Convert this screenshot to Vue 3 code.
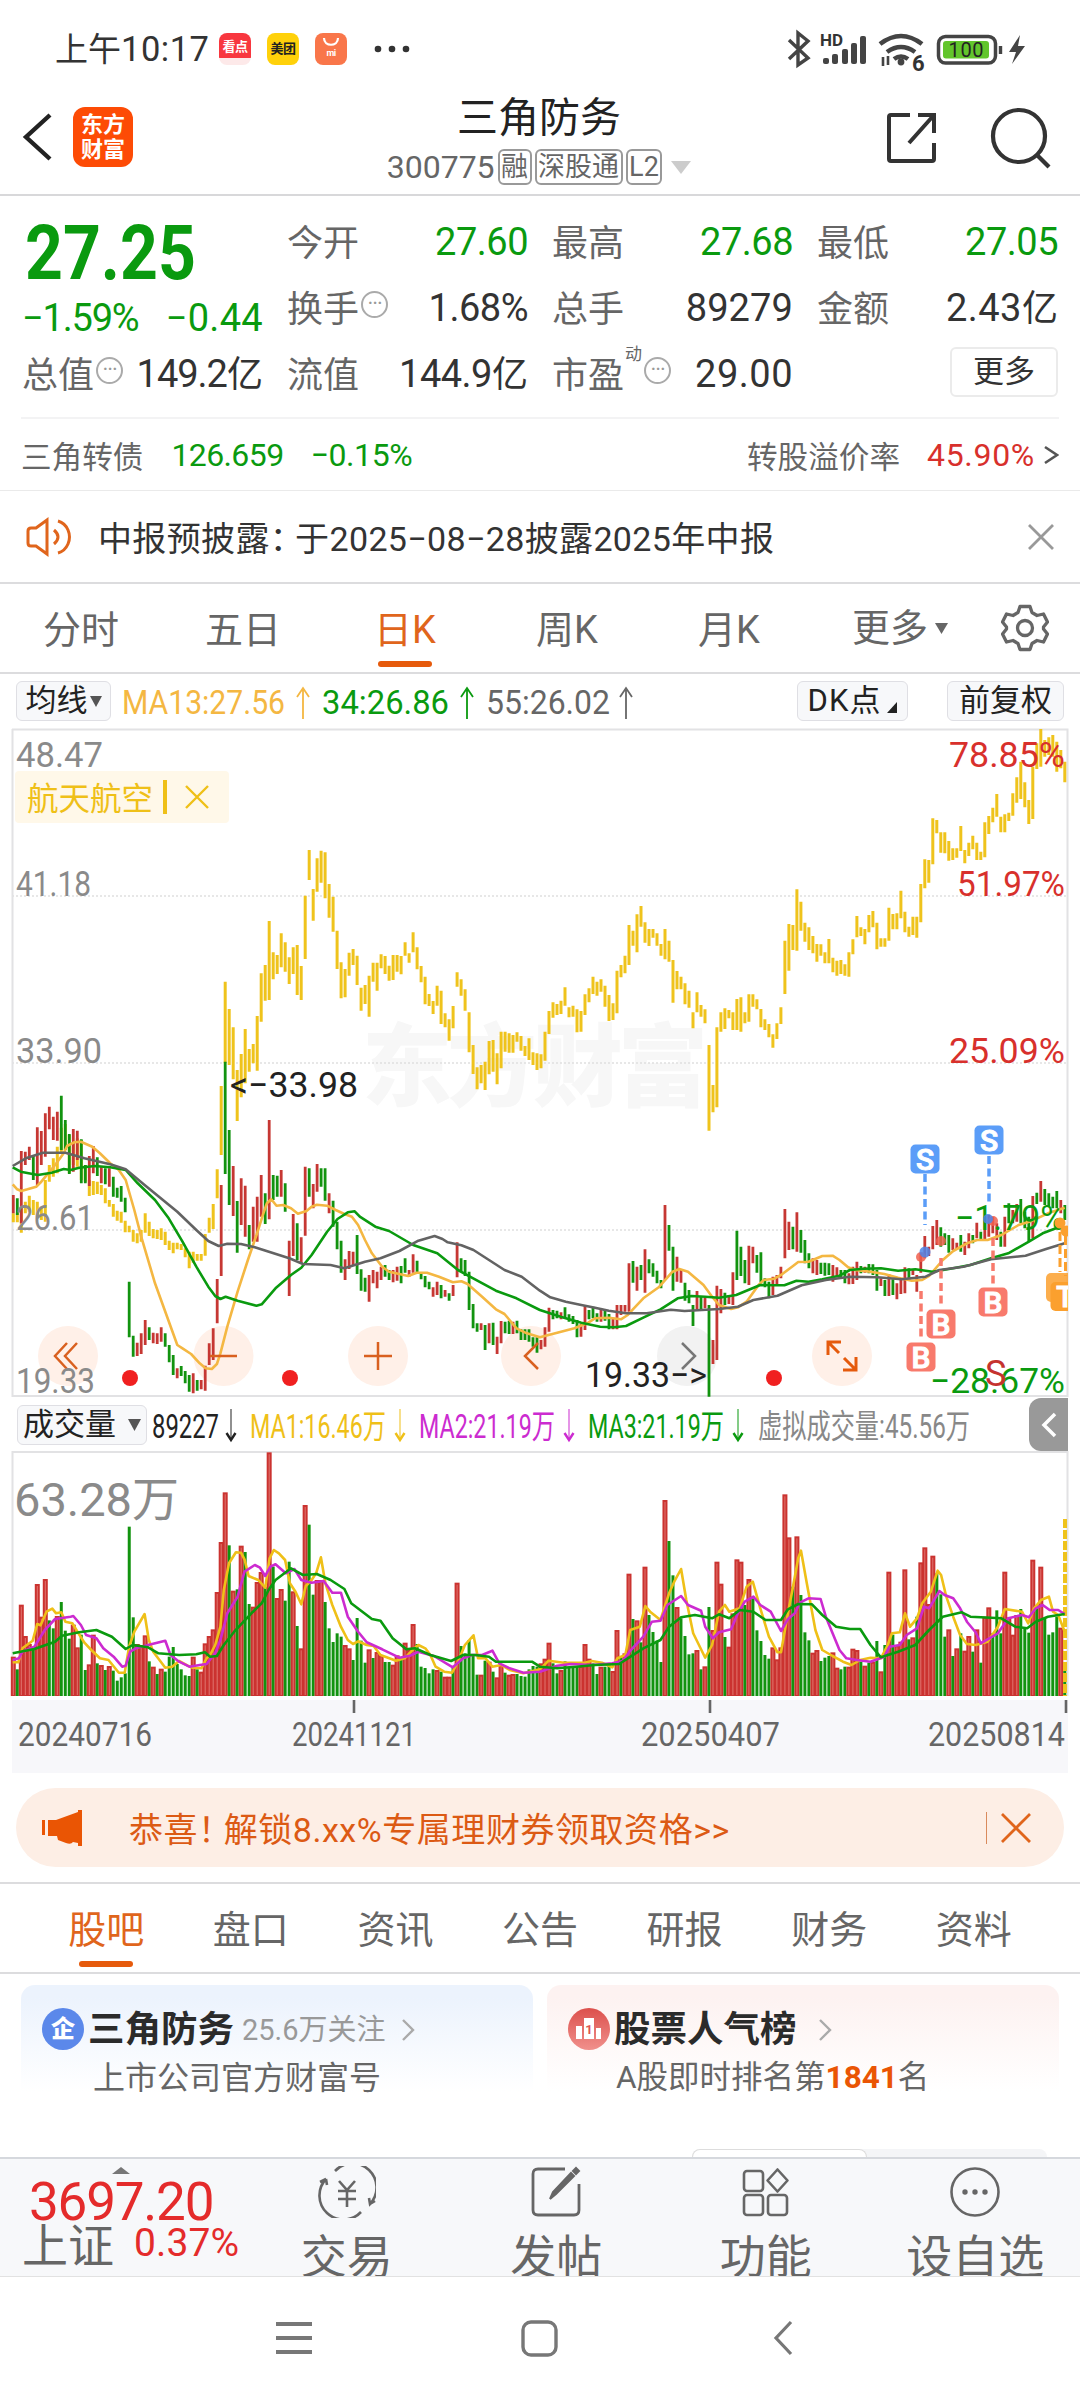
<script setup>
const STEP = 3.998
const X0 = 13.3
const barX = (i) => X0 + i * STEP

// Each daily candle: direction (r up / g down), high, low. Three units per pixel.
const DAILY = `r435-490 g445-495 r303-520 r305-345 r290-330 g315-390 r232-405 r243-345 r190-320 r170-238 r200-270 r185-272 g137-300 g210-300 g252-372 r237-365 r242-330 g268-400 g345-400 r318-408 r288-370 g322-378 r348-400 g355-403 r355-410 g380-440 g413-443 g408-455 g443-487 g695-862 g857-920 r878-918 r850-912 r810-885 g832-870 r848-880 r850-882 r832-875 g850-890 g885-937 g915-975 r955-985 g948-978 g963-1000 g975-1025 r970-1030 g990-1022 r990-1018 r947-1022 r880-945 r835-930 r687-820 r405-678 g35-372 g240-465 r348-498 g453-608 r385-525 r407-560 g525-598 r470-575 r440-575 r375-500 g430-522 r210-508 g375-450 g377-440 r360-440 g400-485 r572-738 r492-618 g520-630 r562-640 r350-557 g355-440 r402-475 r342-425 g355-410 g355-452 r430-490 g452-530 g515-598 g572-668 r628-690 r603-657 r605-645 g555-672 g658-722 g683-725 r675-755 r660-700 r665-715 r650-690 g645-680 g660-690 r660-697 r650-692 g648-700 g625-668 r660-680 r613-668 g632-668 g668-688 g678-712 g695-718 r712-740 r695-735 g705-745 r720-740 g730-752 r705-738 r577-682 g625-665 g630-678 g665-780 g762-835 g820-845 r820-840 g825-900 r820-880 g818-885 r860-912 r813-880 g815-850 g812-852 r815-852 g812-850 g838-870 g838-870 g838-875 g862-890 g862-908
r870-898 r832-890 r773-845 g780-808 g782-805 r787-808 g772-805 g793-815 g798-822 g810-862 r822-860 r768-840 g780-808 g770-805 g790-815 r775-815 g778-812 g792-838 r803-838 r765-838 r765-795 r765-785 r640-785 g633-698 r650-722 g645-690 r598-728 g628-670 g640-680 g662-700 g690-715 r465-690 g525-602 g590-722 r620-695 r658-698 g698-752 g720-760 g765-828 r723-778 g738-778 r743-775 g765-1040 r870-942 r707-930 r717-790 g728-765 r735-762 r667-765 g542-690 g590-678 g630-700 r587-705 r590-640 g615-668 g607-697 g685-712 g695-745 r680-735 r675-705 r650-685 r477-625 r515-600 g530-598 r487-605 g540-608 g570-640 g610-655 r625-670 r630-675 g638-672 g638-677 g640-675 r645-695 r652-680 g660-685 g660-700 r670-703 r650-702 r635-690 g648-670 r650-668 g642-670 g643-675 g660-722 r685-708 g690-738 r672-738 g688-735 r700-748 r690-732 r652-730 g655-690 r660-675 r675-725 r610-668 r558-625 r590-618 r528-598 r510-585 g532-590 g550-585 g555-608 r565-600 r578-600 g555-605 r575-615 r550-595 g555-580 r518-565 g545-572 r500-573 r495-560 r500-550 r520-570 g545-590 r500-590 g460-520 r480-520 r462-515 g447-520 g485-535 g500-575 r438-565 g428-462 r393-455 g417-465 g430-468 g440-475 g423-475 r450-490 g465-510`

// Sector index overlay, high-low pairs. The first stretch is measured from the lower origin.
const SECTOR_LOW = `490-517 488-517 475-548 455-490 437-485 450-495 455-500 470-510 390-515 345-395 325-380 290-370 233-310 222-300 255-370 280-345 265-350 270-390 345-395 390-438 393-435 395-432 405-435 415-460 450-470 462-500 482-512 485-518 512-547 527-547 540-575 550-580 540-575 490-548 515-558 537-565 540-567 535-570 545-585 572-600 578-610 578-598 582-600 595-622 605-655 605-638 612-632 612-632 552-617 503-548 462-537 358-445 108-315`
const SECTOR_HIGH = `785-1030 867-1035 922-1078 1050-1203 1002-1132 927-1090 987-1055 972-1030 888-1052 760-905 735-842 603-840 697-778 705-762 640-742 667-755 712-792 682-762 675-825 738-840 527-717 390-480 507-602 415-515 392-488 397-535 492-593 530-635 632-747 727-835 747-832 698-767 687-735 707-795 803-872 795-852 767-890 728-785 728-812 703-745 708-762 737-782 705-780 705-755 708-763 667-707 700-728 637-697 682-748 738-787 770-853 822-858 843-882 797-857 812-912 880-922 898-962 858-925 757-800 778-827 808-872 877-997 975-1062 1042-1108 1035-1090 1025-1110 963-1063 960-1055 1000-1093 935-1045 935-995 940-998 945-998 937-965 948-992 978-1008 955-1020 997-1035 1000-1050
1003-1045 935-1022 873-942 847-893 852-885 842-882 802-857 862-892 857-890 868-937 873-935 823-885 805-847 770-822 785-827 778-815 797-860 825-903 850-900 752-880 735-772 707-760 615-735 632-677 583-697 558-620 607-668 627-678 627-653 640-677 672-707 627-718 662-725 720-848 753-808 770-808 790-853 812-863 877-925 817-877 855-890 868-910 975-1232 1095-1177 922-1162 877-935 865-927 870-895 877-930 837-930 832-935 877-910 823-905 823-860 838-868 867-922 898-930 912-952 943-983 910-957 862-912 662-822 612-752 615-690 508-692 545-632 608-665 622-690 648-700 672-725 673-707 697-730 657-730 713-757 722-767 720-762 733-767 697-770 658-703 588-652 622-648 627-673 585-637 573-622 608-688 655-680 655-680 563-662 582-628 580-628 512-595 575-637 620-650 590-645 590-653 492-607 418-505 420-488 295-433 300-340 337-398 337-400 363-422 385-420 385-413 318-393 390-430 368-408 347-388 368-420 395-420 307-412 288-342 263-307 222-290 290-337 283-337 278-303 220-287 172-248 125-237 187-262 240-312 140-297 70-147 27-140 60-110 52-105 45-110 65-155 90-145 125-187`

const VOLUME = `r770 g808 r614 r708 r732 g740 r552 r650 r537 g661 g685 r648 g606 g692 g716 r674 r742 g704 g810 r793 r704 g790 r795 g810 r798 g812 g842 g832 g820 g380 g652 r732 r735 r706 g784 r800 g822 r806 g815 g770 g741 g792 g808 g826 g828 r770 g808 r815 r730 r708 r688 r576 r426 r277 g436 r572 g568 r437 g456 g612 r620 r546 r516 g560 r157 g500 r594 r567 g602 g485 r574 g678 r745 r315 g374 g584 r540 r540 g606 g685 g726 g700 g710 r735 r745 g780 g654 g722 g788 r748 g774 r756 r766 g786 g786 r794 r766 g776 r728 r750 r672 g732 g800 g804 g820 g808 r810 g815 r830 r830 g800 r548 g738 g760 g720 g762 g824 r824 g782 r785 g815 r832 r795 g818 r824 r822 g822 g828 g830 g808 g798 g800
r790 r776 r728 g790 g820 r810 g784 g800 g800 g800 r798 r732 r776 g790 g822 r800 g800 g798 r813 r690 g770 r760 r521 g657 r661 g727 r500 g645 g696 g722 g786 r300 g423 g526 r621 g655 g708 g763 g760 r750 g808 r799 g621 r690 r485 r551 g711 r740 r640 r478 r485 g615 r537 g590 g691 g723 g765 g776 r742 r778 r742 r283 r412 g560 r409 g585 g697 g721 r758 r750 g783 g773 g768 r757 r803 g808 g800 r800 r746 r750 g785 r797 g788 r785 g723 r814 g735 r515 g704 r736 r725 r508 g718 r712 g650 r487 r442 r612 r467 g520 g583 g710 r688 g768 r745 g700 r752 r708 g755 r688 g788 r650 r622 g700 g631 g700 r515 r652 r704 r645 g627 g685 g698 r479 g615 r500 g655 g704 g697 g650 r683 g788`

const words = (s) => s.trim().split(/\s+/)
const bars = (list, y0, start = 0) =>
  list.map((w, i) => {
    const [hi, lo] = w.split('-').map(Number)
    return `M${barX(i + start).toFixed(1)} ${(y0 + hi / 3).toFixed(1)}V${(y0 + lo / 3).toFixed(1)}`
  }).join('')
const sectorLow = words(SECTOR_LOW)
const sectorPath = bars(sectorLow, 1050) + bars(words(SECTOR_HIGH), 720, sectorLow.length)
const sidePath = (c) =>
  words(DAILY).map((w, i) => (w[0] === c ? bars([w.slice(1)], 1050, i) : '')).join('')
const upPath = sidePath('r')
const downPath = sidePath('g')
const vol = words(VOLUME).map((w, i) => {
  const top = 1400 + Number(w.slice(1)) / 3
  const up = w[0] === 'r'
  const width = up ? 5 : 3
  return { up, c: barX(i), x: barX(i) - width / 2, y: top, h: 1696 - top, w: width }
})
const hollow = vol.filter((b) => b.up).map((b) => `M${b.c.toFixed(1)} ${(b.y + 2).toFixed(1)}V1695`).join('')

// Moving averages; the right-hand list continues 1568 units further along.
const curve = (left, right, y0) => {
  const pts = [...words(left).map((p) => p.split(',').map(Number)),
    ...words(right).map((p) => { const [x, y] = p.split(',').map(Number); return [x + 1568, y] })]
  return pts.map(([x, y]) => `${(x / 2.904).toFixed(1)},${(y0 + y / 3).toFixed(1)}`).join(' ')
}
const priceLines = [
  { c: '#f4b742', p: curve('37,403 50,418 62,423 80,418 105,410 120,395 140,370 160,345 185,310 195,288 215,277 235,275 268,290 290,310 320,340 345,360 365,390 390,480 410,560 450,700 515,885 530,895 555,912 580,940 597,955 615,957 630,942 640,910 660,830 690,725 720,630 745,555 765,490 775,460 788,448 803,467 822,465 845,475 865,491 890,483 905,470 920,464 950,467 975,480 1000,492 1022,500 1040,525 1060,570 1080,610 1110,650 1130,665 1160,672 1185,678 1210,668 1240,668 1275,680 1315,697 1340,694 1358,702 1400,740 1440,778 1465,792 1500,835 1530,850', '0,862 50,848 100,835 140,818 160,805 200,803 235,808 255,795 270,778 300,745 345,712 385,665 405,657 430,665 475,705 500,740 520,765 555,777 575,772 600,755 635,705 650,690 680,686 700,675 735,648 750,636 780,635 820,618 850,617 870,630 895,652 915,660 960,665 1000,672 1040,683 1080,692 1110,690 1130,678 1170,630 1200,603 1240,580 1270,570 1300,570 1340,555 1390,525 1430,512 1475,490 1524,473', 1050) },
  { c: '#0a9a0f', p: curve('37,352 60,365 110,375 150,368 185,357 205,360 230,353 275,348 320,352 365,360 400,400 450,450 490,505 530,575 570,650 605,710 625,738 640,747 655,740 690,752 745,767 760,763 800,715 845,675 875,653 905,615 950,545 980,507 1010,487 1030,484 1045,500 1090,530 1130,543 1200,585 1270,610 1330,660 1370,683 1440,722 1500,745', '0,780 60,800 120,818 175,830 215,832 250,828 300,803 350,778 400,745 440,738 480,740 520,743 570,735 640,705 680,706 710,706 745,692 780,695 820,688 870,677 900,660 940,656 990,655 1040,662 1090,658 1140,665 1200,655 1250,645 1310,625 1360,610 1420,575 1460,550 1510,530', 1050) },
  { c: '#636363', p: curve('37,348 75,325 125,308 190,308 245,325 320,343 365,358 420,405 515,485 570,540 605,573 635,588 660,581 700,582 740,592 840,625 880,642 960,645 1000,655 1060,635 1105,625 1160,603 1215,572 1262,558 1285,567 1300,577 1340,586 1375,600 1420,630 1465,660 1515,680', '0,722 30,742 75,755 120,765 160,773 200,782 250,790 310,790 380,779 420,783 520,777 575,770 620,750 690,737 760,706 830,690 900,680 980,682 1050,688 1120,680 1160,660 1230,650 1310,628 1410,617 1470,597 1524,580', 1050) },
]
const volumeLines = [
  { c: '#efc018', p: curve('37,787 53,787 65,745 95,722 108,672 118,676 135,635 152,626 163,640 178,637 190,665 210,670 225,695 245,728 265,750 290,775 315,780 345,818 362,818 375,740 390,695 420,642 432,720 445,755 480,803 500,800 520,783 545,797 560,803 585,805 600,775 610,765 625,735 640,680 650,570 665,490 685,457 700,458 710,478 722,528 750,540 770,563 783,475 795,450 810,460 828,480 842,550 858,575 875,613 888,558 905,540 918,520 932,472 945,550 965,615 990,680 1010,720 1025,732 1040,724 1065,735 1085,738 1105,765 1150,782 1175,775 1200,748 1215,735 1235,745 1250,765 1265,800 1290,815 1313,818 1330,785 1350,735 1375,706 1388,775 1410,775 1430,800 1455,795 1480,810 1520,820', '0,808 25,782 70,788 130,788 150,783 180,788 210,802 225,775 248,765 262,690 290,680 306,618 320,635 350,660 375,580 390,545 410,507 425,600 445,700 480,773 500,735 520,635 537,615 550,635 580,625 600,560 618,545 640,625 665,710 690,757 700,757 720,640 735,560 750,475 758,452 775,550 800,690 820,750 850,768 880,785 905,795 930,780 960,773 990,775 1010,735 1022,700 1045,697 1060,640 1075,680 1095,655 1110,610 1135,575 1155,512 1165,525 1180,590 1200,650 1220,705 1240,732 1265,735 1300,725 1330,680 1350,627 1400,635 1418,670 1435,625 1455,600 1478,590 1490,635 1505,645 1524,695', 1400) },
  { c: '#cc2bd0', p: curve('37,780 55,775 65,755 100,740 130,690 160,657 205,650 213,648 235,675 250,705 280,715 300,745 330,770 355,800 365,797 378,755 395,745 430,735 480,722 495,765 520,785 550,800 580,795 600,792 625,760 640,720 660,640 690,590 710,515 740,495 755,503 770,528 785,500 800,493 830,520 855,507 875,540 905,548 940,543 965,578 990,578 1010,650 1040,695 1065,727 1110,748 1160,773 1190,767 1215,755 1260,768 1315,802 1345,775 1370,765 1400,765 1430,752 1450,790 1480,805 1520,818', '0,815 50,797 90,792 150,795 210,790 240,783 260,755 300,710 325,665 350,662 370,615 410,588 430,615 468,632 480,680 502,715 520,697 555,688 575,640 595,605 620,590 640,615 670,635 700,693 720,657 740,640 755,608 780,595 815,597 830,650 850,700 870,750 890,775 920,780 960,785 1000,770 1015,740 1045,735 1065,705 1095,685 1115,620 1130,625 1160,573 1175,585 1200,595 1220,625 1240,665 1265,697 1280,730 1330,700 1360,655 1400,645 1420,652 1440,625 1460,615 1480,630 1505,630 1524,642', 1400) },
  { c: '#0a9a0f', p: curve('37,760 100,747 160,725 180,707 230,697 280,690 325,710 365,747 385,735 430,742 460,760 520,765 570,763 595,757 610,770 630,768 650,735 680,695 730,640 760,610 780,570 800,540 845,505 880,525 920,522 960,540 1000,567 1020,610 1080,657 1105,662 1140,715 1180,748 1205,745 1250,765 1310,783 1345,765 1380,765 1420,770 1440,785 1545,785', '0,800 50,805 105,800 160,795 230,792 255,775 300,745 350,720 375,680 410,652 450,645 500,655 520,643 550,655 580,630 620,635 655,660 700,660 720,628 750,612 790,613 820,645 860,680 900,687 930,687 960,735 990,772 1040,755 1090,735 1130,690 1170,650 1225,637 1250,650 1340,655 1380,680 1415,685 1440,665 1475,650 1524,642', 1400) },
]

const leftLabels = [['48.47', 767, 87], ['41.18', 896, 75], ['33.90', 1063, 86], ['26.61', 1229.5, 78], ['19.33', 1392.5, 79]]
const rightLabels = [['78.85%', 767, 116, '#d8302c'], ['51.97%', 896, 108, '#d8302c'], ['25.09%', 1063, 116, '#d8302c'], ['−1.79%', 1230, 110, '#0a9a0f'], ['−28.67%', 1392.5, 135, '#0a9a0f']]
const knobs = [68, 223.5, 378, 531, 687, 842]
const flags = [
  { t: 'S', x: 925, y: 1159, c: '#5b9df8', x2: 925, a: 1174, b: 1225 },
  { t: 'S', x: 989, y: 1140, c: '#5b9df8', x2: 989, a: 1156, b: 1206 },
  { t: 'B', x: 921, y: 1357, c: '#f87a6c', x2: 921, a: 1291, b: 1341 },
  { t: 'B', x: 941, y: 1324, c: '#f87a6c', x2: 941, a: 1258, b: 1308 },
  { t: 'B', x: 993, y: 1302, c: '#f87a6c', x2: 993, a: 1238, b: 1287 },
]
const dates = [['20240716', 18, 134], ['20241121', 292, 124], ['20250407', 641, 139], ['20250814', 928, 137]]
const maLabels = [
  ['MA13:27.56', 122, 163, '#f4b742'], ['34:26.86', 322, 127, '#0a9a0f'], ['55:26.02', 486, 124, '#666'],
]
const maArrows = [[303, '#f4b742'], [467, '#0a9a0f'], [626, '#666']]
const volLabels = [
  ['89227', 152, 67, '#222'], ['MA1:16.46万', 250, 136, '#efc018'], ['MA2:21.19万', 419, 136, '#cc2bd0'],
  ['MA3:21.19万', 588, 136, '#0a9a0f'], ['虚拟成交量:45.56万', 758, 212, '#888'],
]
const volArrows = [[231, '#222'], [400, '#efc018'], [569, '#cc2bd0'], [738, '#0a9a0f']]
const periods = ['分时', '五日', '日K', '周K', '月K']
const sections = ['股吧', '盘口', '资讯', '公告', '研报', '财务', '资料']
</script>

<template>
  <div class="screen">
    <header class="status">
      <span class="clock">上午<b>10:17</b></span>
      <span class="app red">看点</span>
      <span class="app yellow">美团</span>
      <span class="app orange">
        <svg width="32" height="32" viewBox="0 0 32 32"><path d="M9 5c0 9 14 9 14 0" fill="none" stroke="#fff" stroke-width="2.2" /><text x="16" y="23" font-size="9" font-weight="700" fill="#fff" text-anchor="middle">mi</text></svg>
      </span>
      <svg class="dots" width="36" height="8" viewBox="0 0 36 8" fill="#333"><circle cx="4" cy="4" r="3.3" /><circle cx="18" cy="4" r="3.3" /><circle cx="32" cy="4" r="3.3" /></svg>
      <svg class="sys" width="250" height="48" viewBox="784 26 250 48" fill="none" stroke="#444" stroke-width="3.4">
        <path d="M789 40 808 58 798 65V33l10 8-19 18" />
        <text x="820" y="46" font-size="16" font-weight="700" fill="#333" stroke="none" textLength="23" lengthAdjust="spacingAndGlyphs">HD</text>
        <g fill="#444" stroke="none"><rect x="823" y="58" width="6" height="6" rx="2" /><rect x="832" y="54" width="6" height="10" rx="2" /><rect x="842" y="49" width="6" height="15" rx="2" /><rect x="851" y="43" width="6" height="21" rx="2" /><rect x="860" y="36" width="6" height="28" rx="2" /></g>
        <path d="M880 44q21-16 42 0M887 52q14-10 28 0M894 59q7-5 14 0" stroke-width="4.6" />
        <circle cx="901" cy="62" r="3.4" fill="#444" stroke="none" />
        <path d="M883 57v9M888 56v9" stroke-width="2.6" />
        <text x="912" y="71" font-size="22" font-weight="700" fill="#333" stroke="none">6</text>
        <rect x="938.5" y="36.500" width="57" height="26.500" rx="7" stroke-width="3.5" />
        <rect x="943" y="41" width="46" height="17.500" rx="3" fill="#62c52c" stroke="none" />
        <path d="M1000.500 46v8" stroke-width="3.4" />
        <text x="966" y="57" font-size="20" fill="#222" stroke="none" text-anchor="middle" textLength="35">100</text>
        <path d="M1020 35 1009 52h7l-4 12 13-18h-7z" fill="#444" stroke="none" />
      </svg>
    </header>

    <div class="head">
      <svg width="32" height="50" viewBox="0 0 32 50" fill="none" stroke="#222" stroke-width="4.4"><path d="M28 3 4 25l24 22" /></svg>
      <div class="logo"><span>东方</span><span>财富</span></div>
      <div class="title">
        <h1>三角防务</h1>
        <div class="code"><span class="num">300775</span><i>融</i><i>深股通</i><i>L2</i><svg width="20" height="13" viewBox="0 0 20 13"><path d="M0 0h20L10 13z" fill="#ccc" /></svg></div>
      </div>
      <svg width="54" height="54" viewBox="0 0 54 54" fill="none" stroke="#333" stroke-width="4"><path d="M25 4H6q-2 0-2 2v42q0 2 2 2h41q2 0 2-2V32M33 4h16v18M49 4 24 32" /></svg>
      <svg width="62" height="62" viewBox="0 0 62 62" fill="none" stroke="#333" stroke-width="4.200"><circle cx="29" cy="29" r="26" /><path d="m46 47 13 13" /></svg>
    </div>

    <section class="quote">
      <div class="col main">
        <div class="price"><span>27.25</span></div>
        <div class="delta"><span>−1.59%</span><span class="chg">−0.44</span></div>
        <div class="cell"><label>总值<em class="info">···</em></label><span class="v mix"><span class="num tight">149.2</span>亿</span></div>
      </div>
      <div class="col">
        <div class="cell"><label>今开</label><span class="v green num">27.60</span></div>
        <div class="cell"><label>换手<em class="info">···</em></label><span class="v num">1.68%</span></div>
        <div class="cell"><label>流值</label><span class="v mix"><span class="num">144.9</span>亿</span></div>
      </div>
      <div class="col">
        <div class="cell"><label>最高</label><span class="v green num">27.68</span></div>
        <div class="cell"><label>总手</label><span class="v num even">89279</span></div>
        <div class="cell"><label>市盈<sup>动</sup><em class="info">···</em></label><span class="v num wide">29.00</span></div>
      </div>
      <div class="col">
        <div class="cell"><label>最低</label><span class="v green num">27.05</span></div>
        <div class="cell"><label>金额</label><span class="v mix"><span class="num wide">2.43</span>亿</span></div>
        <div class="cell end"><button class="more">更多</button></div>
      </div>
    </section>

    <section class="bond">
      <span>三角转债</span><span class="n green a">126.659</span><span class="n green b">−0.15%</span>
      <span class="push">转股溢价率</span><span class="n red c">45.90%</span>
      <svg width="15" height="20" viewBox="0 0 15 20" fill="none" stroke="#555" stroke-width="2.600"><path d="m1 2 12 8-12 8" /></svg>
    </section>

    <section class="notice">
      <svg width="48" height="42" viewBox="0 0 48 42" fill="none" stroke="#e0651c" stroke-width="3"><path d="M21 4 10 12H5q-3 0-3 3v12q0 3 3 3h5l11 8zM28 14q8 7 0 14M32 5q7 2 10 9 3 7 0 14-3 7-10 9" /></svg>
      <p>中报预披露<span class="punct">：</span>于2025−08−28披露2025年中报</p>
      <svg width="26" height="26" viewBox="0 0 26 26" fill="none" stroke="#999" stroke-width="2.800"><path d="m1 1 24 24M25 1 1 25" /></svg>
    </section>

    <nav class="periods">
      <span v-for="p in periods" :key="p" :class="{ on: p === '日K' }">{{ p }}</span>
      <span class="dd">更多<svg width="13" height="11" viewBox="0 0 13 11"><path d="M0 0h13L6.500 11z" fill="#666" /></svg></span>
      <svg class="gear" width="48" height="48" viewBox="0 0 48 48" fill="none" stroke="#666" stroke-width="3.300" stroke-linejoin="round"><path d="M19 2.500h10l2 6 5 3 6.500-1.500 4 8-4 5v2l4 5-4 8-6.500-1.500-5 3-2 6H19l-2-6-5-3L5.500 38l-4-8 4-5v-2l-4-5 4-8L12 11.500l5-3z" /><circle cx="24" cy="24" r="7.500" /></svg>
    </nav>

    <section class="mabar">
      <button class="chip ma">均线<svg width="12" height="11" viewBox="0 0 12 11"><path d="M0 0h12L6 11z" fill="#555" /></svg></button>
      <svg class="legend" width="530" height="54" viewBox="115 674 530 54">
        <text v-for="l in maLabels" :key="l[0]" :x="l[1]" y="714" :textLength="l[2]" lengthAdjust="spacingAndGlyphs" font-size="33" :fill="l[3]">{{ l[0] }}</text>
        <path v-for="a in maArrows" :key="a[0]" :d="`M${a[0]} 719V690m-6 7 6-9 6 9`" fill="none" :stroke="a[1]" stroke-width="1.800" />
      </svg>
      <button class="chip dk"><span>DK点</span><svg width="10" height="11" viewBox="0 0 10 11"><path d="M10 0v11H0z" fill="#222" /></svg></button>
      <button class="chip fq">前复权</button>
    </section>

    <svg class="kline" width="1080" height="670" viewBox="0 728 1080 670">
      <text x="362" y="1099" font-size="90" font-weight="900" fill="#f7f7f7" textLength="346">东方财富</text>
      <g stroke="#e0e0e0" stroke-width="1.500" stroke-dasharray="2 2"><path d="M12 896h1055M12 1063h1055M12 1230h1055" /></g>
      <path d="M12 729.500h1055.500V1396H12.500V729" fill="none" stroke="#e2e2e4" stroke-width="2" />
      <circle v-for="(k, i) in knobs" :key="k" :cx="k" cy="1356" r="30" :fill="i === 4 ? '#f2f2f2' : '#fff0e8'" />
      <rect x="15" y="771" width="214" height="52" rx="4" fill="#fff8e9" />
      <g fill="#efc018"><text x="27" y="810" font-size="31.500" textLength="126">航天航空</text><rect x="163" y="780" width="4" height="34" /></g>
      <path d="m186 786 22 22m0-22-22 22" stroke="#efc018" stroke-width="2.400" />
      <path :d="sectorPath" stroke="#efc31c" stroke-width="3" />
      <path :d="upPath" stroke="#c63733" stroke-width="2.800" />
      <path :d="downPath" stroke="#12930f" stroke-width="2.800" />
      <polyline v-for="l in priceLines" :key="l.c" :points="l.p" fill="none" :stroke="l.c" stroke-width="2.600" stroke-linejoin="round" />
      <g fill="none" stroke="#d9601f" stroke-width="2.500">
        <path d="m67 1343-12 13 12 13M77 1343l-12 13 12 13M210 1356h27M364 1356h28M378 1342v28M538 1343l-13 13 13 13" />
        <path d="m839 1353-11-11m0 13v-13h13M844 1358l12 12m0-13v13h-13" stroke="#e55a0c" stroke-width="3" />
        <path d="m682 1343 13 13-13 13" stroke="#777" />
      </g>
      <g fill="#f02020"><circle cx="130" cy="1378" r="8" /><circle cx="290" cy="1378" r="8" /><circle cx="774" cy="1378" r="8" /></g>
      <text v-for="l in leftLabels" :key="l[0]" x="16" :y="l[1]" :textLength="l[2]" lengthAdjust="spacingAndGlyphs" font-size="35" fill="#8a8a8a">{{ l[0] }}</text>
      <text v-for="l in rightLabels" :key="l[0]" :x="1065 - l[2]" :y="l[1]" :textLength="l[2]" lengthAdjust="spacingAndGlyphs" font-size="35" :fill="l[3]">{{ l[0] }}</text>
      <g font-size="35" fill="#222"><text x="230" y="1096.500" textLength="128" lengthAdjust="spacingAndGlyphs">&lt;−33.98</text><text x="585" y="1387" textLength="122" lengthAdjust="spacingAndGlyphs">19.33−&gt;</text></g>
      <g v-for="f in flags" :key="f.x">
        <path :d="`M${f.x2} ${f.a}V${f.b}`" :stroke="f.c" stroke-width="3.500" stroke-dasharray="8 4.500" />
        <rect :x="f.x - 14.500" :y="f.y - 14.500" width="29" height="29" rx="5" :fill="f.c" />
        <text :x="f.x" :y="f.y + 10.500" text-anchor="middle" font-size="30" font-weight="500" fill="#fff" stroke="#fff">{{ f.t }}</text>
      </g>
      <g fill="#f0604f" fill-opacity=".85"><circle cx="921" cy="1257" r="5" /><circle cx="941" cy="1241" r="5" /><circle cx="993" cy="1221" r="5" /><circle cx="925" cy="1252" r="5.500" fill="#4d84e8" /><circle cx="988" cy="1219" r="5" fill="#4d84e8" /></g>
      <svg x="1040" y="1210" width="28" height="110" viewBox="1040 1210 28 110" fill="#fba02e">
        <circle cx="1060" cy="1223" r="5.500" /><circle cx="1066" cy="1231" r="5.500" />
        <path d="M1060 1232v40M1065.500 1236v40" stroke="#fba02e" stroke-width="3" stroke-dasharray="9 4" />
        <rect x="1046" y="1273" width="29" height="29" rx="5" opacity=".85" />
        <rect x="1050.500" y="1282" width="29" height="29" rx="5" />
        <text x="1065" y="1307" text-anchor="middle" font-size="29" font-weight="500" fill="#fff" stroke="#fff">T</text>
      </svg>
      <text x="985" y="1386" font-size="36" fill="#c5332f">S</text>
    </svg>

    <section class="volbar">
      <button class="chip vol">成交量<svg width="13" height="12" viewBox="0 0 13 12"><path d="M0 0h13L6.500 12z" fill="#555" /></svg></button>
      <svg width="830" height="53" viewBox="150 1398 830 53">
        <text v-for="l in volLabels" :key="l[0]" :x="l[1]" y="1437.500" :textLength="l[2]" lengthAdjust="spacingAndGlyphs" font-size="32.500" :fill="l[3]">{{ l[0] }}</text>
        <g v-for="a in volArrows" :key="a[0]" :stroke="a[1]" fill="none"><path :d="`M${a[0]} 1409v31`" stroke-width="2" opacity=".5" /><path :d="`m${a[0] - 4.500} 1433 4.500 7 4.500-7`" stroke-width="2.400" /></g>
      </svg>
      <button class="fold"><svg width="16" height="26" viewBox="0 0 16 26" fill="none" stroke="#fff" stroke-width="3.500"><path d="M14 2 3 13l11 11" /></svg></button>
    </section>

    <svg class="volume" width="1080" height="325" viewBox="0 1451 1080 325">
      <path d="M12.500 1696V1452H1067.500V1696" fill="none" stroke="#e2e2e4" stroke-width="2" />
      <rect v-for="(b, i) in vol" :key="i" :x="b.x" :y="b.y" :width="b.w" :height="b.h" :fill="b.up ? '#cb3330' : '#12930f'" />
      <path :d="hollow" stroke="#f3a9a2" stroke-width=".8" opacity=".7" />
      <path d="M1065 1519V1696" stroke="#efc31c" stroke-width="4" stroke-dasharray="9 2" />
      <polyline v-for="l in volumeLines" :key="l.c" :points="l.p" fill="none" :stroke="l.c" stroke-width="2.600" stroke-linejoin="round" />
      <text x="14" y="1516" font-size="47" fill="#8a8a8a" textLength="165" lengthAdjust="spacingAndGlyphs">63.28万</text>
      <rect x="12" y="1700" width="1056" height="73" fill="#f7f7fa" />
      <path d="M354 1700v13M710 1700v13M1066 1700v13" stroke="#666" stroke-width="2.600" />
      <text v-for="d in dates" :key="d[0]" :x="d[1]" y="1746" :textLength="d[2]" lengthAdjust="spacingAndGlyphs" font-size="32.500" fill="#666">{{ d[0] }}</text>
    </svg>

    <section class="promo">
      <svg width="42" height="36" viewBox="0 0 42 36" fill="#ea5504"><path d="M0 10h3v15H0zM6 10h8L36 2V0h4v36h-4v-3l-5-1q-2 3-7 1l-8-3-1-4H6z" /></svg>
      <p>恭喜<span class="punct">！</span>解锁8.xx%专属理财券领取资格&gt;&gt;</p>
      <i></i>
      <svg width="30" height="30" viewBox="0 0 30 30" fill="none" stroke="#e0651c" stroke-width="2.800"><path d="m1 1 28 28M29 1 1 29" /></svg>
    </section>

    <nav class="sections"><span v-for="s in sections" :key="s" :class="{ on: s === '股吧' }">{{ s }}</span></nav>

    <section class="feed">
      <div class="cards">
        <article class="card blue">
          <h2><b class="badge">企</b>三角防务<small>25.6万关注</small><svg width="13" height="22" viewBox="0 0 13 22" fill="none" stroke="#aaa" stroke-width="2.400"><path d="m1 1 10 10L1 21" /></svg></h2>
          <p>上市公司官方财富号</p>
        </article>
        <article class="card pink">
          <h2><b class="badge"><svg width="26" height="22" viewBox="0 0 26 22" fill="#fff"><path d="M0 8h6v13H0zM8 0h10v21H8zM20 10h5v11h-5z" /><text x="13" y="16" text-anchor="middle" font-size="13" font-weight="700" fill="#dd5550">1</text></svg></b>股票人气榜<svg class="far" width="13" height="22" viewBox="0 0 13 22" fill="none" stroke="#aaa" stroke-width="2.400"><path d="m1 1 10 10L1 21" /></svg></h2>
          <p>A股即时排名第<strong>1841</strong>名</p>
        </article>
      </div>
      <div class="switch"><span></span></div>
    </section>

    <footer class="tabbar">
      <div class="index">
        <svg width="18" height="7" viewBox="0 0 18 7"><path d="M9 0l9 7H0z" fill="#777" /></svg>
        <strong>3697.20</strong>
        <p>上证<span>0.37%</span></p>
      </div>
      <div class="tab">
        <svg width="58" height="52" viewBox="0 0 58 52" fill="none" stroke="#666" stroke-width="2.600"><path d="M17 5a24 24 0 0 1 35 33l-1-6m1 6 5-3M43 46A24 24 0 0 1 8 13l-6 3m6-3 1 6M21 15l8 9 8-9M29 24v17M20 25h18M20 33h18" /></svg>交易
      </div>
      <div class="tab">
        <svg width="52" height="52" viewBox="0 0 52 52" fill="none" stroke="#666" stroke-width="2.800"><path d="M35 3H8Q3 3 3 8v36q0 5 5 5h36q5 0 5-5V18" /><path d="m20 33 3-7L41 7l3 3-18 18zM43 5l3-3 3 3-3 3z" fill="#666" stroke-width="2" /></svg>发帖
      </div>
      <div class="tab">
        <svg width="52" height="52" viewBox="0 0 52 52" fill="none" stroke="#666" stroke-width="2.600"><rect x="4" y="5" width="19" height="20" rx="3" /><rect x="4" y="29" width="19" height="20" rx="3" /><rect x="28" y="29" width="19" height="20" rx="3" /><path d="m37.500 3.500 10 11-10 11-10-11z" stroke-linejoin="round" /></svg>功能
      </div>
      <div class="tab">
        <svg width="52" height="52" viewBox="0 0 52 52" fill="none" stroke="#666" stroke-width="2.600"><circle cx="26" cy="26" r="23.500" /><g fill="#666" stroke="none"><circle cx="16" cy="26" r="2.700" /><circle cx="26" cy="26" r="2.700" /><circle cx="36" cy="26" r="2.700" /></g></svg>设自选
      </div>
    </footer>
    <nav class="system">
      <svg width="36" height="34" viewBox="0 0 36 34" stroke="#777" stroke-width="3.800"><path d="M0 3h36M0 17h36M0 31h36" /></svg>
      <svg width="37" height="37" viewBox="0 0 37 37" fill="none" stroke="#777" stroke-width="3.400"><rect x="2" y="2" width="33" height="33" rx="8" /></svg>
      <svg width="20" height="36" viewBox="0 0 20 36" fill="none" stroke="#777" stroke-width="3.200"><path d="M18 2 3 18l15 16" /></svg>
    </nav>
  </div>
</template>

<style>
body { margin: 0; background: #fff; }
</style>

<style scoped>
* { box-sizing: border-box; margin: 0; }
.screen { width: 1080px; height: 2400px; overflow: hidden; background: #fff; color: #333; font-family: Roboto, "Noto Sans CJK SC", sans-serif; display: flex; flex-direction: column; }
.screen > * { flex-shrink: 0; }
svg { display: block; flex-shrink: 0; }
text { font-family: Roboto, "Noto Sans CJK SC", sans-serif; }
i, em { font-style: normal; }
button { font-family: inherit; padding: 0; }
.green { color: #0a9a0f !important; }
.red { color: #d8302c; }

.status { height: 98px; display: flex; align-items: center; padding-left: 55px; }
.clock { font-size: 33px; width: 164px; white-space: nowrap; line-height: 40px; }
.clock b { font-weight: 400; font-size: 34.500px; letter-spacing: .5px; }
.app { width: 32px; height: 32px; border-radius: 8px; margin-right: 16px; font-size: 13px; font-weight: 700; line-height: 32px; text-align: center; letter-spacing: -.5px; }
.app.red { background: linear-gradient(#f8373f 78%, #fde9e9 79%); color: #fff; line-height: 27px; }
.app.yellow { background: #ffd10a; color: #222; }
.app.orange { background: #f9764a; }
.dots { margin-left: 11px; }
.sys { margin-left: auto; margin-right: 46px; margin-top: 2px; }

.head { height: 98px; margin-bottom: -1px; border-bottom: 2px solid #d8d8da; display: flex; align-items: center; padding: 0 28px 14px 22px; }
.head > svg:first-child { margin-top: -4px; }
.logo { width: 60px; height: 60px; margin: -4px 0 0 19px; border-radius: 12px; background: #fd4b05; color: #fff; font-size: 22px; font-weight: 700; line-height: 25px; display: flex; flex-direction: column; align-items: center; justify-content: center; }
.title { flex: 1; display: flex; flex-direction: column; align-items: center; padding: 6px 0 0 60px; }
h1 { font-size: 41px; line-height: 50px; font-weight: 400; color: #222; }
.code { display: flex; align-items: center; gap: 3px; height: 48px; color: #666; }
.code .num { font-size: 32px; }
.code i { border: 2px solid #999; border-radius: 6px; font-size: 27px; line-height: 32px; height: 36px; padding: 0 1.500px; }
.code svg { margin-left: 6px; }
.head > svg:nth-child(4) { margin: -2px 51px 0 0; }
.head > svg:nth-child(5) { margin-top: -2px; }

.quote { height: 222px; padding: 12px 22px 0; display: grid; grid-template-columns: repeat(4, 1fr); gap: 24px; }
.col { display: flex; flex-direction: column; }
.cell { height: 66px; display: flex; align-items: center; justify-content: space-between; white-space: nowrap; font-size: 36px; }
.cell label { color: #666; display: flex; align-items: center; }
.cell .v { color: #333; }
.cell .num { font-size: 38px; letter-spacing: -.5px; }
.cell > .num { padding-top: 4px; }
.cell .mix { margin-top: -3px; }
.cell .tight { letter-spacing: -1px; }
.cell .even { letter-spacing: .1px; }
.cell .wide { letter-spacing: .5px; }
.info { width: 27px; height: 27px; border: 2px solid #aaa; border-radius: 50%; font-size: 22px; line-height: 22px; letter-spacing: -1px; text-align: center; color: #999; margin: -3px 0 0 2px; }
.cell sup { font-size: 17px; align-self: flex-start; line-height: 18px; margin: -1px 0 0 1px; }
.price { height: 88px; padding: 4px 0 0 3px; }
.price span { display: inline-block; font-size: 76px; line-height: 84px; font-weight: 700; color: #0a9a0f; transform: scaleX(.87); transform-origin: left; }
.delta { height: 44px; line-height: 46px; font-size: 38px; letter-spacing: -1.200px; color: #0a9a0f; display: flex; justify-content: space-between; white-space: nowrap; }
.delta .chg { letter-spacing: .3px; }
.cell.end { justify-content: flex-end; }
.more { width: 108px; height: 50px; border: 2px solid #ebebeb; border-radius: 6px; background: #fff; font-size: 31px; line-height: 44px; color: #333; }

.bond { height: 73px; margin: 0 21px; border-top: 2px solid #f3f3f4; display: flex; align-items: center; font-size: 30.600px; color: #666; }
.bond .n { font-size: 32px; letter-spacing: -.6px; }
.bond .a { margin-left: 28px; }
.bond .b { margin-left: 27px; letter-spacing: -.4px; }
.bond .push { margin-left: auto; }
.bond .c { margin: 0 9px 0 27px; letter-spacing: .7px; }

.notice { height: 92px; border-top: 1px solid #eaeaea; display: flex; align-items: center; padding: 0 26px; }
.notice p { flex: 1; font-size: 34px; padding-left: 24px; white-space: nowrap; color: #333; letter-spacing: .35px; }
.punct { margin-right: -9px; }

.periods { height: 92px; border-top: 2px solid #dcdcde; border-bottom: 2px solid #dcdcde; display: flex; align-items: center; font-size: 38px; color: #666; }
.periods span { width: 162px; height: 88px; line-height: 92px; text-align: center; }
.periods .dd { display: flex; align-items: center; padding-left: 42px; gap: 7px; width: 191px; }
.on { color: #e0651c; display: flex; flex-direction: column; align-items: center; }
.on::after { content: ""; width: 54px; height: 6px; border-radius: 3px; background: #e65a0c; flex-shrink: 0; }
.periods .on::after { margin-top: -15px; }

.mabar { height: 54px; display: flex; align-items: center; padding-left: 16px; }
.chip { border: 1px solid #dfdfe4; border-radius: 6px; background: #f7f8fa; height: 40px; font-size: 31px; line-height: 38px; color: #222; display: flex; align-items: center; justify-content: center; white-space: nowrap; }
.ma { width: 95px; gap: 2px; }
.legend { margin-left: 4px; }
.dk { width: 111px; margin-left: auto; gap: 6px; }
.dk span { letter-spacing: 1px; }
.dk svg { margin-top: 12px; }
.fq { width: 117px; margin: 0 16px 0 39px; }

.volbar { height: 53px; display: flex; padding-left: 17px; align-items: center; }
.vol { width: 130px; gap: 12px; }
.volbar > svg { margin-left: 3px; }
.fold { margin-left: auto; width: 39px; height: 53px; margin-right: 12px; border: 0; border-radius: 12px 0 0 12px; background: #999; display: flex; align-items: center; justify-content: center; }

.promo { height: 79px; margin: 12px 16px 15px; border-radius: 40px; background: #fdeee5; display: flex; align-items: center; padding: 0 33px 0 26px; color: #dc5a14; }
.promo p { flex: 1; font-size: 34px; padding-left: 45px; white-space: nowrap; letter-spacing: .55px; }
.promo i { width: 1px; height: 32px; background: #d98a5c; margin-right: 14px; }

.sections { height: 92px; border-top: 2px solid #dcdcde; border-bottom: 2px solid #dcdcde; padding: 0 34px; display: flex; font-size: 38px; color: #666; }
.sections span { flex: 1; text-align: center; line-height: 92px; }
.sections .on::after { margin-top: -15px; }

.feed { height: 183px; display: flex; flex-direction: column; justify-content: space-between; overflow: hidden; }
.cards { display: flex; gap: 14px; padding: 11px 21px 0; }
.card { flex: 1; height: 125px; border-radius: 14px; padding: 18px 21px 0; }
.card.blue { background: linear-gradient(#ecf3fd 10%, #fff 85%); }
.card.pink { background: linear-gradient(#fdf2f1 10%, #fff 85%); }
.card h2 { display: flex; align-items: center; font-size: 36.500px; line-height: 54px; font-weight: 700; height: 54px; color: #2b2b2b; white-space: nowrap; }
.badge { width: 42px; height: 42px; border-radius: 50%; margin: -3px 4px 0 0; display: flex; align-items: center; justify-content: center; color: #fff; font-size: 24px; line-height: 1; }
.blue .badge { background: #5b88ea; }
.pink .badge { background: linear-gradient(#dc504c, #f0908c); }
.card small { font-size: 29px; font-weight: 400; color: #999; margin: 0 16px 0 8px; }
.card .far { margin-left: 22px; }
.card p { font-size: 32px; line-height: 42px; padding-left: 51px; color: #666; white-space: nowrap; }
.card.pink p { padding-left: 48px; font-size: 31.500px; }
.card strong { color: #ea5504; }
.switch { width: 355px; height: 8px; margin-left: 692px; border-radius: 12px 12px 0 0; background: #f4f5f7; }
.switch span { display: block; width: 175px; height: 8px; border: 1px solid #ddd; border-bottom: 0; border-radius: 12px 12px 0 0; background: #fff; }

.tabbar { height: 119px; border-top: 2px solid #d5d8dd; background: #f7f8fa; overflow: hidden; display: flex; color: #666; }
.index { width: 242px; padding: 8px 0 0 22px; white-space: nowrap; }
.index svg { margin-left: 90px; }
.index strong { display: block; font-weight: 400; font-size: 53px; line-height: 53px; margin-top: 2px; padding-left: 7px; letter-spacing: -1.200px; color: #e42b2b; }
.index p { display: flex; align-items: center; font-size: 46px; line-height: 46px; margin-top: -6px; }
.index p span { color: #e42b2b; font-size: 39px; letter-spacing: .1px; margin: -6px 0 0 20px; }
.tab { width: 209.500px; display: flex; flex-direction: column; align-items: center; font-size: 46px; line-height: 60px; padding-top: 7px; white-space: nowrap; }
.tab svg { margin-bottom: 9px; }
.system { height: 123px; border-top: 1px solid #e2e2e2; display: flex; align-items: center; padding-left: 276px; }
.system svg:nth-child(2) { margin-left: 209px; }
.system svg:nth-child(3) { margin-left: 215px; }
</style>
